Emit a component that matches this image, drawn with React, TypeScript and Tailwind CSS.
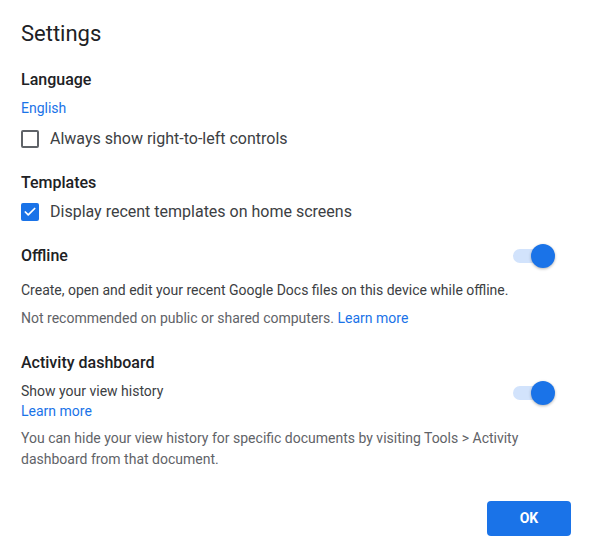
import { Check } from 'lucide-react';

const font = { fontFamily: 'Roboto, "Noto Sans", Arial, sans-serif' };

function Toggle() {
  return (
    <div className="relative w-[42px] h-[24px] shrink-0">
      <div className="absolute left-0 top-[5px] w-[36px] h-[14px] rounded-full bg-[#d2e3fc]" />
      <div className="absolute right-0 top-0 w-[24px] h-[24px] rounded-full bg-[#1a73e8] shadow-[0_1px_3px_rgba(0,0,0,0.3)]" />
    </div>
  );
}

function CheckRow({ checked, label, className }: { checked: boolean; label: string; className?: string }) {
  return (
    <div className={`flex items-center h-[24px] ${className ?? ''}`}>
      {checked ? (
        <div className="w-[18px] h-[18px] rounded-[2px] bg-[#1a73e8] flex items-center justify-center">
          <Check className="w-[14px] h-[14px] text-white" strokeWidth={3} />
        </div>
      ) : (
        <div className="w-[18px] h-[18px] rounded-[2px] border-2 border-[#5f6368]" />
      )}
      <span className="ml-[11px] text-[16px] text-[#3c4043]">{label}</span>
    </div>
  );
}

export default function App() {
  return (
    <div style={font} className="w-[597px] h-[557px] bg-white pl-[21px] pr-[26px] flex flex-col">
      <h1 className="mt-[20px] text-[22px] leading-[28px] text-[#202124]">Settings</h1>

      {/* Language */}
      <h2 className="mt-[20px] text-[16px] leading-[24px] font-medium text-[#202124]">Language</h2>
      <a className="mt-[6px] text-[14px] leading-[20px] text-[#1a73e8] self-start">English</a>
      <CheckRow className="mt-[9px]" checked={false} label="Always show right-to-left controls" />

      {/* Templates */}
      <h2 className="mt-[20px] text-[16px] leading-[24px] font-medium text-[#202124]">Templates</h2>
      <CheckRow className="mt-[5px]" checked label="Display recent templates on home screens" />

      {/* Offline */}
      <div className="mt-[20px] flex items-center justify-between pr-[16px]">
        <h2 className="text-[16px] leading-[24px] font-medium text-[#202124]">Offline</h2>
        <Toggle />
      </div>
      <p className="mt-[12px] text-[14px] leading-[20px] text-[#3c4043]">
        Create, open and edit your recent Google Docs files on this device while offline.
      </p>
      <p className="mt-[8px] text-[14px] leading-[20px] text-[#5f6368]">
        Not recommended on public or shared computers. <a className="text-[#1a73e8]">Learn more</a>
      </p>

      {/* Activity dashboard */}
      <h2 className="mt-[23px] text-[16px] leading-[24px] font-medium text-[#202124]">Activity dashboard</h2>
      <div className="mt-[6px] flex items-start justify-between pr-[16px]">
        <div className="flex flex-col">
          <span className="text-[14px] leading-[20px] text-[#3c4043]">Show your view history</span>
          <a className="text-[14px] leading-[20px] text-[#1a73e8]">Learn more</a>
        </div>
        <Toggle />
      </div>
      <p className="mt-[7px] text-[14px] leading-[21px] text-[#5f6368]">
        You can hide your view history for specific documents by visiting Tools &gt; Activity dashboard from that document.
      </p>

      <div className="mt-auto mb-[21px] flex justify-end">
        <button className="w-[84px] h-[35px] rounded-[4px] bg-[#1a73e8] text-white text-[14px] font-bold">OK</button>
      </div>
    </div>
  );
}
